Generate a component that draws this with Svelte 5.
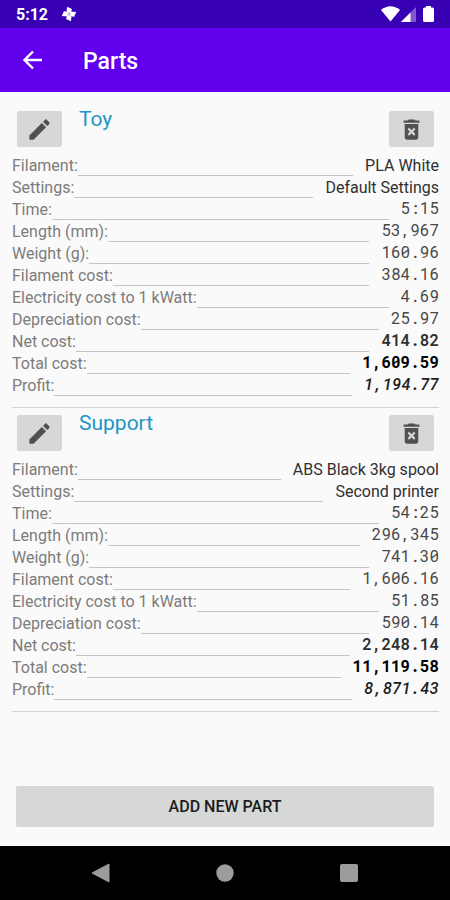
<script>
  const parts = [
    {
      name: 'Toy',
      rows: [
        ['Filament', 'PLA White', 'text'],
        ['Settings', 'Default Settings', 'text'],
        ['Time', '5:15', 'mono'],
        ['Length (mm)', '53,967', 'mono'],
        ['Weight (g)', '160.96', 'mono'],
        ['Filament cost', '384.16', 'mono'],
        ['Electricity cost to 1 kWatt', '4.69', 'mono'],
        ['Depreciation cost', '25.97', 'mono'],
        ['Net cost', '414.82', 'mono net'],
        ['Total cost', '1,609.59', 'mono total'],
        ['Profit', '1,194.77', 'mono profit'],
      ],
    },
    {
      name: 'Support',
      rows: [
        ['Filament', 'ABS Black 3kg spool', 'text'],
        ['Settings', 'Second printer', 'text'],
        ['Time', '54:25', 'mono'],
        ['Length (mm)', '296,345', 'mono'],
        ['Weight (g)', '741.30', 'mono'],
        ['Filament cost', '1,606.16', 'mono'],
        ['Electricity cost to 1 kWatt', '51.85', 'mono'],
        ['Depreciation cost', '590.14', 'mono'],
        ['Net cost', '2,248.14', 'mono net'],
        ['Total cost', '11,119.58', 'mono total'],
        ['Profit', '8,871.43', 'mono profit'],
      ],
    },
  ];
</script>

<div class="screen">
  <div class="status">
    <span class="clock">5:12</span>
    <svg class="fan" width="16" height="16" viewBox="0 0 16 16" aria-hidden="true">
      <g fill="#fff">
        {#each [0, 90, 180, 270] as angle}
          <path d="M8 8 5.500 6.500 6 .8 11 3 9.800 6.500Z" transform="rotate({angle} 8 8)" />
        {/each}
      </g>
      <circle cx="8" cy="8" r="1.700" fill="#c4b3ea" />
    </svg>
    <svg class="signals" width="54" height="18" viewBox="0 0 54 18" aria-hidden="true">
      <path d="M0 5Q9.500-2.500 19 5L9.500 16.500Z" fill="#fff" />
      <path d="M35 2V17H20Z" fill="#8458cf" />
      <path d="M29.500 7.500V17H20Z" fill="#fff" />
      <path d="M45 2.500V1h5v1.500h1.500a1.500 1.500 0 0 1 1.500 1.500v11.500a1.500 1.500 0 0 1-1.500 1.500h-8a1.500 1.500 0 0 1-1.500-1.500V4a1.500 1.500 0 0 1 1.500-1.500Z" fill="#fff" />
    </svg>
  </div>

  <header>
    <button class="back" aria-label="Back">
      <svg width="20" height="20" viewBox="0 0 20 20">
        <path d="M19 10H2M10 1.500 1.500 10l8.500 8.500" fill="none" stroke="#fff" stroke-width="2.400" />
      </svg>
    </button>
    <h1>Parts</h1>
  </header>

  <main>
    {#each parts as part}
      <section>
        <div class="head">
          <button class="tool" aria-label="Edit {part.name}">
            <svg width="27" height="27" viewBox="0 0 24 24" fill="#4f5150">
              <path d="M3 17.250V21h3.750L17.810 9.940l-3.750-3.750L3 17.250zM20.710 7.040c.39-.39.39-1.020 0-1.410l-2.340-2.340c-.39-.39-1.020-.39-1.410 0l-1.830 1.830 3.750 3.750 1.830-1.830z" />
            </svg>
          </button>
          <h2>{part.name}</h2>
          <button class="tool" aria-label="Delete {part.name}">
            <svg width="27" height="27" viewBox="0 0 24 24" fill="#4f5150">
              <path d="M6 19c0 1.100.9 2 2 2h8c1.100 0 2-.9 2-2V7H6v12zm2.460-7.120 1.410-1.410L12 12.590l2.120-2.120 1.410 1.410L13.410 14l2.120 2.120-1.410 1.410L12 15.410l-2.120 2.120-1.410-1.410L10.590 14l-2.130-2.120zM15.500 4l-1-1h-5l-1 1H5v2h14V4z" />
            </svg>
          </button>
        </div>
        <dl>
          {#each part.rows as [label, value, kind]}
            <div class="row">
              <dt>{label}:</dt>
              <dd class={kind}>{value}</dd>
            </div>
          {/each}
        </dl>
      </section>
    {/each}
  </main>

  <div class="action">
    <button class="add">ADD NEW PART</button>
  </div>

  <nav>
    <button aria-label="Back">
      <svg width="20" height="20" viewBox="0 0 20 20"><path d="M18 1v18L1 10Z" fill="#9c9c9c" stroke="#9c9c9c" stroke-linejoin="round" /></svg>
    </button>
    <button aria-label="Home">
      <svg width="20" height="20" viewBox="0 0 20 20"><circle cx="10" cy="10" r="8.700" fill="#9c9c9c" /></svg>
    </button>
    <button aria-label="Recent apps">
      <svg width="20" height="20" viewBox="0 0 20 20"><rect x="1" y="1" width="18" height="18" rx="2" fill="#9c9c9c" /></svg>
    </button>
  </nav>
</div>

<style>
  :global(body) {
    margin: 0;
  }
  .screen {
    min-height: 100vh;
    display: flex;
    flex-direction: column;
    background: #fafafa;
    font-family: Roboto, 'Noto Sans', sans-serif;
    font-size: 16px;
    line-height: 24px;
  }
  button {
    display: flex;
    align-items: center;
    justify-content: center;
    padding: 0;
    border: 0;
    background: none;
    font-family: inherit;
    cursor: pointer;
  }
  .status {
    display: flex;
    align-items: center;
    height: 28px;
    padding: 0 15px 0 16px;
    background: #3700b3;
    color: #fff;
  }
  .clock {
    font-weight: 700;
    padding-top: 2px;
  }
  .fan {
    margin-left: 13px;
  }
  .signals {
    margin-left: auto;
  }
  header {
    display: flex;
    align-items: center;
    height: 64px;
    padding: 0 12px;
    background: #6200ee;
    color: #fff;
  }
  .back {
    width: 42px;
    height: 42px;
  }
  h1 {
    margin: 0 0 0 29px;
    padding-top: 4px;
    font-size: 23px;
    line-height: 28px;
    font-weight: 500;
  }
  main {
    flex: 1;
    padding: 12px 11px 0 12px;
  }
  section {
    padding-bottom: 11px;
    border-bottom: 1px solid #d4d4d4;
  }
  .head {
    display: flex;
    align-items: flex-start;
    padding: 7px 5px 7px;
  }
  .tool {
    width: 45px;
    height: 36px;
    border-radius: 2px;
    background: #d6d8d7;
  }
  h2 {
    flex: 1;
    margin: 0 0 0 17px;
    font-size: 21px;
    line-height: 16px;
    font-weight: 400;
    color: #2196c4;
  }
  dl {
    margin: 0;
  }
  .row {
    display: flex;
    height: 22px;
  }
  .row::before {
    content: '';
    order: 1;
    flex: 1;
    border-bottom: 1px solid #c6c6c6;
  }
  dt {
    color: #7c7c7c;
  }
  dd {
    order: 2;
    margin: 0 0 0 12px;
    color: #303030;
  }
  .mono {
    font-family: 'Roboto Mono', 'DejaVu Sans Mono', monospace;
    line-height: 20px;
    color: #484848;
  }
  .net {
    font-weight: 600;
    color: #303030;
  }
  .total {
    font-weight: 700;
    color: #000;
  }
  .profit {
    font-weight: 500;
    font-style: italic;
    color: #202020;
  }
  .action {
    padding: 16px 16px 19px;
  }
  .add {
    width: 100%;
    height: 41px;
    border-radius: 2px;
    background: #d6d8d7;
    color: #1c1c1c;
    font-size: 16px;
    font-weight: 500;
  }
  nav {
    display: flex;
    justify-content: center;
    align-items: center;
    gap: 84px;
    height: 54px;
    background: #000;
  }
  nav button {
    width: 40px;
    height: 40px;
  }
</style>
